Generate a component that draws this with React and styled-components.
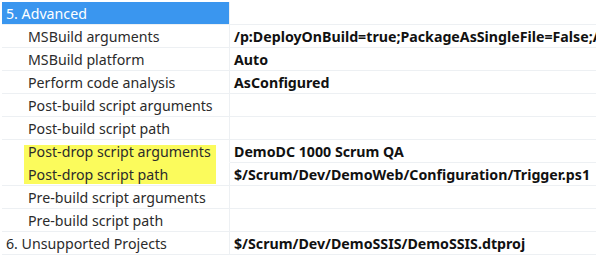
import React from 'react';
import styled, { createGlobalStyle } from 'styled-components';

const GlobalStyle = createGlobalStyle`
    body {
        margin: 0;
        background: #ffffff;
        font-family: "Noto Sans", "Open Sans", sans-serif;
    }
`;

// mark: 'top' | 'bottom' for the two highlighted rows
const rows = [
    { label: '5. Advanced', value: '', header: true },
    { label: 'MSBuild arguments', value: '/p:DeployOnBuild=true;PackageAsSingleFile=False;AutoParameterizationWebConfigConnectionStrings=False' },
    { label: 'MSBuild platform', value: 'Auto' },
    { label: 'Perform code analysis', value: 'AsConfigured' },
    { label: 'Post-build script arguments', value: '' },
    { label: 'Post-build script path', value: '' },
    { label: 'Post-drop script arguments', value: 'DemoDC 1000 Scrum QA', mark: 'top' },
    { label: 'Post-drop script path', value: '$/Scrum/Dev/DemoWeb/Configuration/Trigger.ps1', mark: 'bottom' },
    { label: 'Pre-build script arguments', value: '' },
    { label: 'Pre-build script path', value: '' },
    { label: '6. Unsupported Projects', value: '$/Scrum/Dev/DemoSSIS/DemoSSIS.dtproj', section: true },
];

function App() {
    return (
        <Grid>
            <GlobalStyle />
            {rows.map((r, i) => (
                <Row key={i}>
                    <Label $header={r.header} $section={r.header || r.section} $mark={r.mark}>
                        {r.label}
                    </Label>
                    <Value>{r.value}</Value>
                </Row>
            ))}
        </Grid>
    )
}

const Grid = styled.div`
    padding: 2px 0 0 2px;
    width: 594px;
    overflow: hidden;
`;

const Row = styled.div`
    display: grid;
    grid-template-columns: 228px 1fr;
    height: 23px;
`;

const highlight = {
    top: 'linear-gradient(#fbfb5c, #fbfb5c) 22px 5px / 192px 18px no-repeat',
    bottom: 'linear-gradient(#fbfb5c, #fbfb5c) 22px 0 / 192px 21px no-repeat',
};

const Label = styled.div`
    display: flex;
    align-items: center;
    box-sizing: border-box;
    padding-left: ${p => p.$section ? '4px' : '26px'};
    background: ${p => p.$header ? '#3a96ef' : (p.$mark ? highlight[p.$mark] : 'transparent')};
    color: ${p => p.$header ? '#ffffff' : '#2b2b2b'};
    border-right: 1px solid #edf0f3;
    border-bottom: 1px solid ${p => p.$mark === 'top' ? 'transparent' : '#edf0f3'};
    font-size: 14.2px;
    white-space: nowrap;
`;

const Value = styled.div`
    display: flex;
    align-items: center;
    box-sizing: border-box;
    padding-left: 4px;
    border-bottom: 1px solid #edf0f3;
    font-size: 14.2px;
    font-weight: 700;
    color: #111;
    white-space: nowrap;
    overflow: hidden;
`;

export default App
